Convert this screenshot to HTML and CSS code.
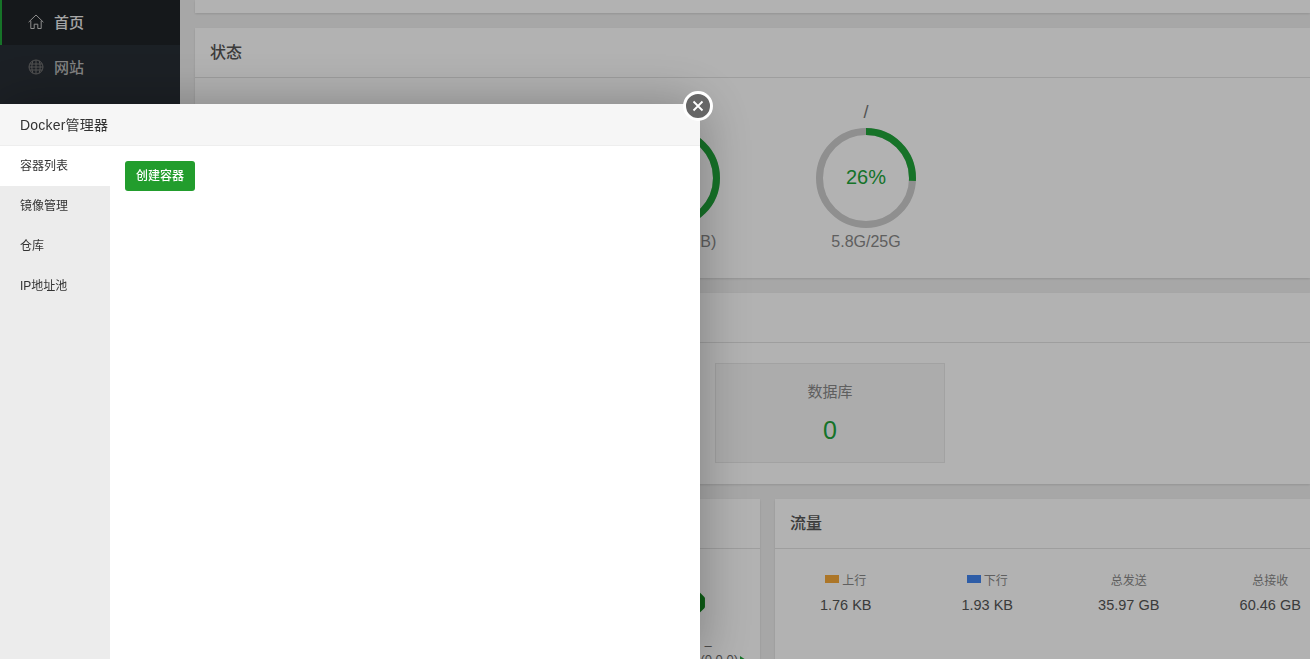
FILE: index.html
```html
<!DOCTYPE html>
<html lang="zh-CN">
<head>
    <meta charset="UTF-8">
    <title>Docker管理器</title>
    <link rel="stylesheet" href="styles.css">
</head>
<body>
    <div class="page">
        <div class="sidebar">
            <a class="menu-item active">
                <svg class="menu-icon" viewBox="0 0 16 16"><path d="M.6 8.200 8 1l7.400 7.200M2.800 6.800v7.700h3.400v-4.300h3.600v4.300h3.400V6.800"/></svg>
                首页
            </a>
            <a class="menu-item">
                <svg class="menu-icon" viewBox="0 0 16 16"><circle cx="8" cy="8" r="7"/><path d="M1 8h14M1.700 5h12.600M1.700 11h12.600M8 1v14M5 1.700c-1.600 3.800-1.600 8.800 0 12.600M11 1.700c1.600 3.800 1.600 8.800 0 12.600"/></svg>
                网站
            </a>
        </div>
        <div class="main">
            <div class="card card-top"></div>

            <div class="card">
                <div class="card-title">状态</div>
                <div class="gauges">
                    <div class="gauge">
                        <div class="gauge-name gauge-name-small">内存</div>
                        <svg class="ring" viewBox="0 0 100 100">
                            <circle class="ring-bg" cx="50" cy="50" r="46.500"/>
                            <circle class="ring-fill" cx="50" cy="50" r="46.500" pathLength="100" stroke-dasharray="65 100" transform="rotate(-90 50 50)"/>
                        </svg>
                        <div class="gauge-size">512/838(MB)</div>
                    </div>
                    <div class="gauge">
                        <div class="gauge-name">/</div>
                        <div class="ring-wrap">
                            <svg class="ring" viewBox="0 0 100 100">
                                <circle class="ring-bg" cx="50" cy="50" r="46.500"/>
                                <circle class="ring-fill" cx="50" cy="50" r="46.500" pathLength="100" stroke-dasharray="26 100" transform="rotate(-90 50 50)"/>
                            </svg>
                            <span class="ring-text">26%</span>
                        </div>
                        <div class="gauge-size">5.8G/25G</div>
                    </div>
                </div>
            </div>

            <div class="card">
                <div class="card-title">概览</div>
                <div class="overview">
                    <div class="count-box"><div class="count-name">网站</div><div class="count-num">0</div></div>
                    <div class="count-box"><div class="count-name">FTP</div><div class="count-num">0</div></div>
                    <div class="count-box"><div class="count-name">数据库</div><div class="count-num">0</div></div>
                </div>
            </div>

            <div class="bottom-row">
                <div class="card soft-card">
                    <div class="card-title">软件</div>
                    <div class="soft-body">
                        <svg class="soft-icon" viewBox="0 0 24 24"><path d="M8 1h8a2 2 0 0 1 1.400.6l5 5a2 2 0 0 1 .6 1.400v8a2 2 0 0 1-.6 1.400l-5 5a2 2 0 0 1-1.400.6H8a2 2 0 0 1-1.400-.6l-5-5A2 2 0 0 1 1 16V8a2 2 0 0 1 .6-1.400l5-5A2 2 0 0 1 8 1z"/></svg>
                        <div class="soft-name">
                            <span class="soft-dash">–</span>
                            <span>(0.0.0)<i class="soft-arrow"></i></span>
                        </div>
                    </div>
                </div>
                <div class="card flow-card">
                    <div class="card-title">流量</div>
                    <div class="flow-stats">
                        <div class="flow-col">
                            <div class="flow-name"><i class="swatch swatch-up"></i>上行</div>
                            <div class="flow-num">1.76 KB</div>
                        </div>
                        <div class="flow-col">
                            <div class="flow-name"><i class="swatch swatch-down"></i>下行</div>
                            <div class="flow-num">1.93 KB</div>
                        </div>
                        <div class="flow-col">
                            <div class="flow-name">总发送</div>
                            <div class="flow-num">35.97 GB</div>
                        </div>
                        <div class="flow-col">
                            <div class="flow-name">总接收</div>
                            <div class="flow-num">60.46 GB</div>
                        </div>
                    </div>
                </div>
            </div>
        </div>
    </div>

    <div class="shade"></div>

    <div class="modal">
        <div class="modal-title">Docker管理器</div>
        <div class="modal-body">
            <div class="tabs">
                <div class="tab active">容器列表</div>
                <div class="tab">镜像管理</div>
                <div class="tab">仓库</div>
                <div class="tab">IP地址池</div>
            </div>
            <div class="tab-content">
                <button class="btn-green">创建容器</button>
            </div>
        </div>
        <button class="modal-close">
            <svg viewBox="0 0 12 12"><path d="M1.500 1.500l9 9M10.500 1.500l-9 9"/></svg>
        </button>
    </div>
</body>
</html>
```

FILE: styles.css
```css
* {
    box-sizing: border-box;
}
html, body {
    margin: 0;
    height: 100%;
    overflow: hidden;
}
body {
    font-family: "Liberation Sans", "Noto Sans CJK SC", sans-serif;
    background: #f0f0f0;
    color: #333;
}
.page {
    display: flex;
    height: 659px;
    overflow: hidden;
}

/* sidebar */
.sidebar {
    flex: 0 0 180px;
    background: #282e35;
}
.menu-item {
    display: flex;
    align-items: center;
    height: 45px;
    padding: 0 0 2px 28px;
    gap: 10px;
    font-size: 15px;
    font-weight: 500;
    color: #bbb;
}
.menu-item.active {
    background: #1f2327;
    border-left: 2px solid #20a53a;
    padding-left: 26px;
    color: #eee;
}
.menu-icon {
    width: 16px;
    height: 16px;
    fill: none;
    stroke: #777;
    stroke-width: 1;
}
.menu-item.active .menu-icon {
    stroke: #ccc;
}

/* main column */
.main {
    flex: none;
    width: 1130px;
    padding-left: 15px;
    display: flex;
    flex-direction: column;
    gap: 15px;
}
.card {
    flex: none;
    background: #fff;
    box-shadow: 0 1px 2px rgba(0, 0, 0, 0.12);
}
.card-top {
    height: 13px;
}
.card-title {
    height: 50px;
    line-height: 49px;
    padding-left: 15px;
    font-size: 16px;
    font-weight: 500;
    color: #555;
    border-bottom: 1px solid #e2e2e2;
}

.gauges {
    display: flex;
    height: 200px;
    padding-left: 377px;
    text-align: center;
}
.gauge {
    width: 196px;
    padding-top: 24px;
}
.gauge-name {
    height: 26px;
    font-size: 18px;
    line-height: 20px;
    color: #777;
}
.gauge-name-small {
    padding-top: 4px;
    font-size: 14px;
}
.ring-wrap {
    position: relative;
    width: 100px;
    height: 100px;
    margin: 0 auto;
}
.ring {
    display: block;
    width: 100px;
    height: 100px;
    margin: 0 auto;
}
.ring-bg, .ring-fill {
    fill: none;
    stroke-width: 7;
}
.ring-bg {
    stroke: #cdcdcd;
}
.ring-fill {
    stroke: #20a53a;
}
.ring-text {
    position: absolute;
    inset: 0;
    line-height: 98px;
    font-size: 20px;
    color: #20a53a;
}
.gauge-size {
    margin-top: 5px;
    font-size: 16px;
    line-height: 18px;
    color: #888;
}

.overview {
    display: flex;
    gap: 15px;
    height: 141px;
    padding: 20px 0 0 30px;
}
.count-box {
    width: 230px;
    height: 100px;
    padding-top: 19px;
    text-align: center;
    background: #f7f7f7;
    border: 1px solid #e8e8e8;
}
.count-name {
    font-size: 15px;
    line-height: 18px;
    color: #888;
}
.count-num {
    margin-top: 14px;
    font-size: 25px;
    line-height: 30px;
    color: #20a53a;
}

.bottom-row {
    flex: none;
    display: flex;
    gap: 15px;
    height: 200px;
}
.soft-card {
    flex: 0 0 565px;
}
.soft-body {
    display: flex;
    flex-direction: column;
    align-items: flex-end;
    padding: 41px 14px 0 0;
    font-size: 13px;
    color: #666;
}
.soft-icon {
    width: 25px;
    height: 25px;
    margin-right: 40px;
    fill: #12881e;
}
.soft-name {
    display: flex;
    flex-direction: column;
    align-items: flex-start;
    margin-top: 24px;
    line-height: 14px;
}
.soft-dash {
    margin-left: 4px;
}
.soft-arrow {
    display: inline-block;
    margin-left: 2px;
    border-left: 6px solid #20a53a;
    border-top: 4px solid transparent;
    border-bottom: 4px solid transparent;
}
.flow-card {
    flex: 0 0 566px;
}
.flow-stats {
    display: flex;
    padding-top: 21px;
}
.flow-col {
    width: 141.500px;
    text-align: center;
}
.flow-name {
    display: flex;
    align-items: center;
    justify-content: center;
    gap: 3px;
    height: 18px;
    font-size: 12px;
    color: #888;
}
.swatch {
    width: 14px;
    height: 8px;
}
.swatch-up {
    background: #f6a93a;
}
.swatch-down {
    background: #4386f0;
}
.flow-num {
    margin-top: 8px;
    font-size: 14.500px;
    line-height: 18px;
    color: #555;
}

/* layer over the page */
.shade {
    position: fixed;
    inset: 0;
    background: rgba(0, 0, 0, 0.3);
}
.modal {
    position: fixed;
    left: 0;
    top: 104px;
    width: 700px;
    height: 555px;
    display: flex;
    flex-direction: column;
    background: #fff;
    box-shadow: 1px 1px 50px rgba(0, 0, 0, 0.3);
}
.modal-title {
    flex: none;
    height: 42px;
    line-height: 43px;
    padding-left: 20px;
    font-size: 14px;
    letter-spacing: 0.2px;
    color: #333;
    background: #f6f6f6;
    border-bottom: 1px solid #eee;
}
.modal-body {
    flex: 1;
    display: flex;
}
.tabs {
    flex: 0 0 110px;
    background: #ececec;
}
.tab {
    height: 40px;
    line-height: 40px;
    padding-left: 20px;
    font-size: 12px;
    color: #333;
}
.tab.active {
    background: #fff;
}
.tab-content {
    flex: 1;
    padding: 15px;
}
.btn-green {
    display: block;
    width: 70px;
    height: 30px;
    padding: 0 0 3px;
    border: none;
    border-radius: 3px;
    font-family: inherit;
    font-size: 12px;
    font-weight: 500;
    color: #fff;
    background: #229d2d;
}
.modal-close {
    position: absolute;
    top: -13px;
    right: -13px;
    width: 30px;
    height: 30px;
    padding: 0;
    display: flex;
    align-items: center;
    justify-content: center;
    border: 3px solid #fff;
    border-radius: 50%;
    background: #666;
}
.modal-close svg {
    width: 12px;
    height: 12px;
    fill: none;
    stroke: #fff;
    stroke-width: 1.800;
}
```
